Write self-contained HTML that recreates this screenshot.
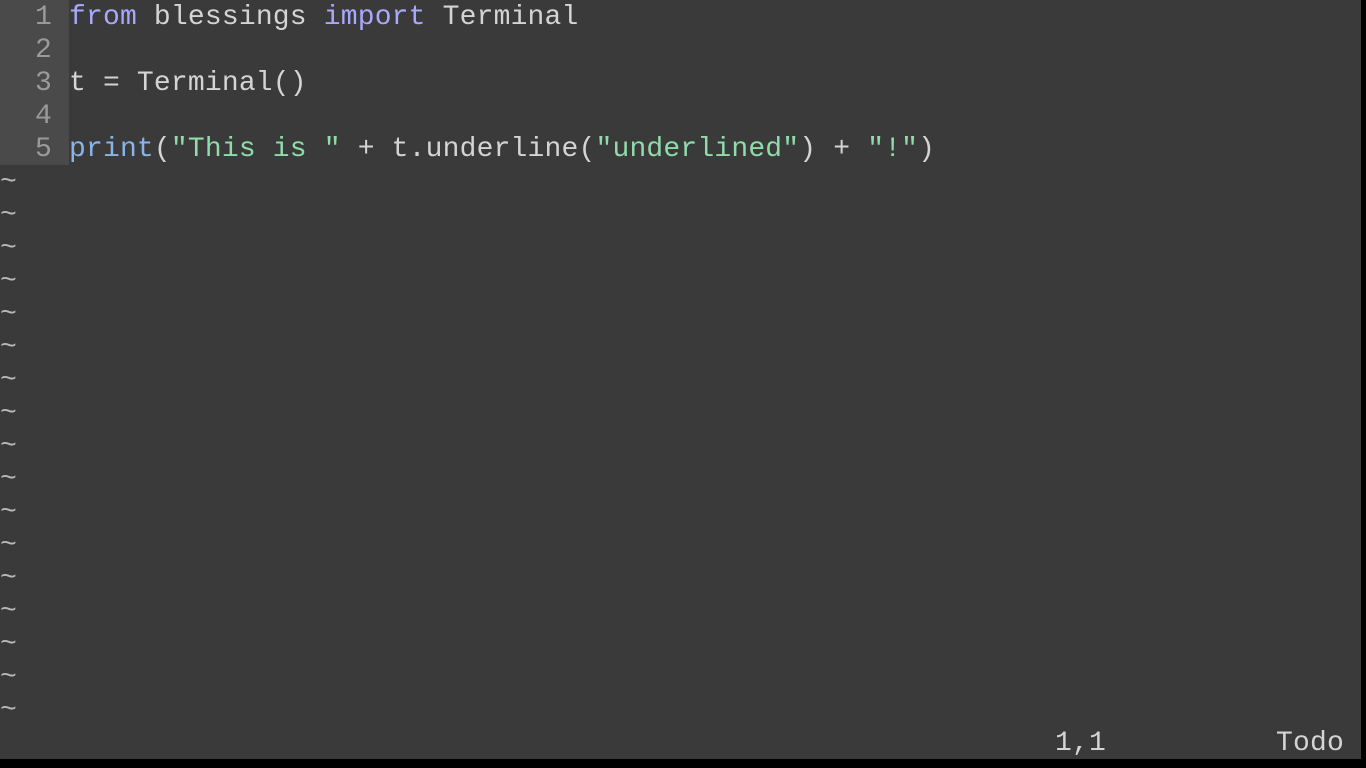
<!DOCTYPE html>
<html><head><style>
html,body{margin:0;padding:0;background:#000;width:1366px;height:768px;overflow:hidden}
#s{position:absolute;left:0;top:0;width:1361px;height:759px;background:#3a3a3a;font-family:"Liberation Mono",monospace;font-size:28px;line-height:33px;color:#d4d4d4;letter-spacing:0.18px}
.l{height:33px;white-space:pre;position:relative;padding-top:1px;box-sizing:border-box}
.g{display:inline-block;width:69px;background:#4a4a4a;color:#9a9a9a;text-align:right;box-sizing:border-box;padding-right:17px;height:33px;margin-top:-1px;padding-top:1px;vertical-align:top}
.k{color:#a8a8ff}.f{color:#88b4e8}.s{color:#8fdcaa}
.t{color:#b8b8b8}
#st{position:absolute;top:727px;left:0;width:1361px;height:33px;white-space:pre}
</style></head><body><div id="s">
<div class="l"><span class="g">1</span><span class="k">from</span> blessings <span class="k">import</span> Terminal</div>
<div class="l"><span class="g">2</span></div>
<div class="l"><span class="g">3</span>t = Terminal()</div>
<div class="l"><span class="g">4</span></div>
<div class="l"><span class="g">5</span><span class="f">print</span>(<span class="s">"This is "</span> + t.underline(<span class="s">"underlined"</span>) + <span class="s">"!"</span>)</div>
<div class="l t">~</div><div class="l t">~</div><div class="l t">~</div><div class="l t">~</div><div class="l t">~</div><div class="l t">~</div><div class="l t">~</div><div class="l t">~</div><div class="l t">~</div><div class="l t">~</div><div class="l t">~</div><div class="l t">~</div><div class="l t">~</div><div class="l t">~</div><div class="l t">~</div><div class="l t">~</div><div class="l t">~</div>
<div id="st"><span style="position:absolute;left:1055px">1,1</span><span style="position:absolute;left:1276px">Todo</span></div>
</div></body></html>
